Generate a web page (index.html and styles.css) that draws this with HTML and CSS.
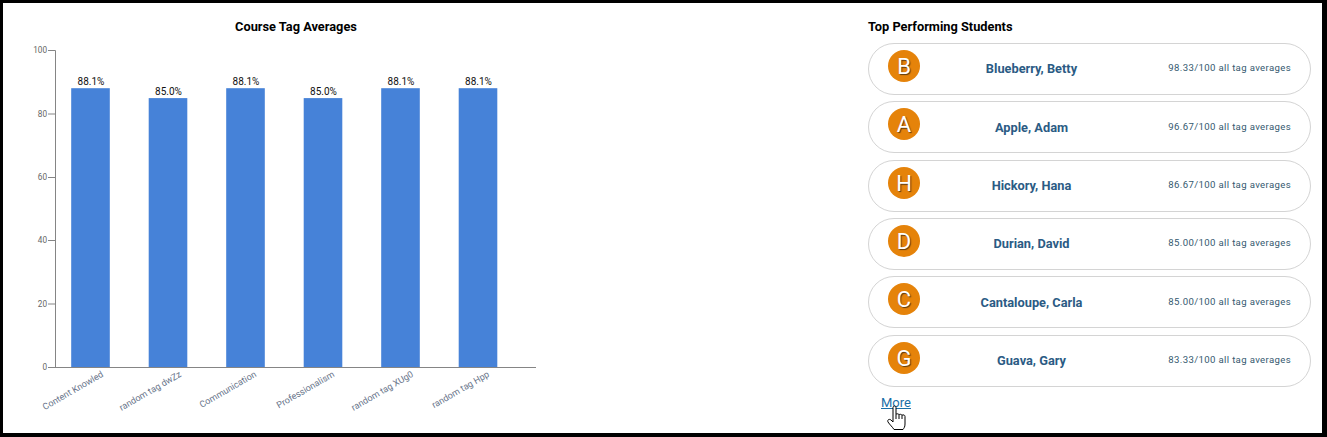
FILE: index.html
```html
<!DOCTYPE html>
<html lang="en">

<head>
  <meta charset="UTF-8">
  <title>Course Overview</title>
  <link rel="stylesheet" href="styles.css">
</head>

<body>
  <div class="app">
    <section class="chart-panel">
      <svg class="chart" width="540" height="427" viewBox="0 0 540 427">
        <text class="chart-title" x="293" y="28">Course Tag Averages</text>

        <g class="bars">
          <rect x="68.2" y="85.2" width="38.6" height="279.3" />
          <rect x="145.7" y="95.1" width="38.6" height="269.4" />
          <rect x="223.2" y="85.2" width="38.6" height="279.3" />
          <rect x="300.7" y="95.1" width="38.6" height="269.4" />
          <rect x="378.2" y="85.2" width="38.6" height="279.3" />
          <rect x="455.7" y="85.2" width="38.6" height="279.3" />
        </g>

        <g class="bar-values">
          <text x="88" y="82">88.1%</text>
          <text x="165.5" y="92">85.0%</text>
          <text x="243" y="82">88.1%</text>
          <text x="320.5" y="92">85.0%</text>
          <text x="398" y="82">88.1%</text>
          <text x="475.5" y="82">88.1%</text>
        </g>

        <g class="axis">
          <path d="M52.5 47.500V364.500H533" />
          <path d="M45 47.500H52.500M45 111H52.500M45 174.500H52.500M45 237.500H52.500M45 301H52.500M45 364.500H54" />
        </g>

        <g class="y-labels">
          <text x="44" y="50">100</text>
          <text x="44" y="114">80</text>
          <text x="44" y="177">60</text>
          <text x="44" y="240">40</text>
          <text x="44" y="304">20</text>
          <text x="44" y="367">0</text>
        </g>

        <g class="x-labels">
          <text transform="translate(101 373) rotate(-30)">Content Knowled</text>
          <text transform="translate(179 373) rotate(-30)">random tag dwZz</text>
          <text transform="translate(254 373) rotate(-30)">Communication</text>
          <text transform="translate(332 373) rotate(-30)">Professionalism</text>
          <text transform="translate(411 373) rotate(-30)">random tag XUg0</text>
          <text transform="translate(487 373) rotate(-30)">random tag Hpp</text>
        </g>
      </svg>
    </section>

    <section class="students">
      <h2 class="students-title">Top Performing Students</h2>
      <div class="student">
        <span class="avatar">B</span>
        <span class="name">Blueberry, Betty</span>
        <span class="score">98.33/100 all tag averages</span>
      </div>
      <div class="student">
        <span class="avatar">A</span>
        <span class="name">Apple, Adam</span>
        <span class="score">96.67/100 all tag averages</span>
      </div>
      <div class="student">
        <span class="avatar">H</span>
        <span class="name">Hickory, Hana</span>
        <span class="score">86.67/100 all tag averages</span>
      </div>
      <div class="student">
        <span class="avatar">D</span>
        <span class="name">Durian, David</span>
        <span class="score">85.00/100 all tag averages</span>
      </div>
      <div class="student">
        <span class="avatar">C</span>
        <span class="name">Cantaloupe, Carla</span>
        <span class="score">85.00/100 all tag averages</span>
      </div>
      <div class="student">
        <span class="avatar">G</span>
        <span class="name">Guava, Gary</span>
        <span class="score">83.33/100 all tag averages</span>
      </div>
      <div class="more-row">
        <a class="more" href="#">More</a>
        <svg class="cursor" width="24" height="26" viewBox="0 0 24 26">
          <path d="M7 14V3.500C7 1.500 10 1.500 10 3.500V10.500C10 9.500 13 9.500 13 11C13 10 16 10 16 11.500C16 10.500 19 10.500 19 12.500V20C19 23 18 24 17 25.500H8C6.500 23 4 21 2 18C1 16 3 14.500 5 16L7 18Z" />
          <path class="cursor-lines" d="M10 10.500V15M13 11V15M16 11.500V15" />
        </svg>
      </div>
    </section>
  </div>
</body>

</html>
```

FILE: styles.css
```css
* {
  padding: 0;
  margin: 0;
  box-sizing: border-box;
}

body {
  background-color: #000;
  font-family: Roboto, "Liberation Sans", sans-serif;
}

.app {
  display: flex;
  justify-content: space-between;
  width: 1325px;
  height: 436px;
  border: 3px solid #000;
  background-color: #fff;
}

.chart-panel {
  width: 540px;
}

.chart {
  display: block;
}

.chart-title {
  font-size: 12.8px;
  font-weight: 700;
  text-anchor: middle;
  fill: #000;
}

.bars rect {
  fill: #4682d8;
}

.bar-values text {
  font-size: 10px;
  text-anchor: middle;
  fill: #111;
}

.axis path {
  fill: none;
  stroke: #858585;
  stroke-width: 1;
}

.y-labels text {
  font-size: 8.2px;
  text-anchor: end;
  fill: #666;
}

.x-labels text {
  font-size: 9px;
  text-anchor: end;
  fill: #68748a;
}

.students {
  width: 443px;
  margin-right: 11px;
  padding-top: 17px;
}

.students-title {
  height: 23px;
  font-size: 12.8px;
  line-height: 14px;
  font-weight: 700;
  color: #000;
}

.student {
  display: grid;
  grid-template-columns: 32px 223px 1fr;
  height: 52px;
  margin-bottom: 6.35px;
  padding: 6px 19px;
  border: 1px solid #d4d4d4;
  border-radius: 26px;
}

.avatar {
  width: 32px;
  height: 32px;
  border-radius: 50%;
  background-color: #e5830a;
  color: #fff;
  font-size: 22px;
  line-height: 33px;
  text-align: center;
  text-shadow: 1px 1px 1px #5c3a10;
}

.name {
  padding-top: 12.2px;
  font-size: 12.8px;
  line-height: 14px;
  font-weight: 700;
  text-align: center;
  color: #2b5b84;
}

.score {
  padding-top: 12.2px;
  font-size: 9.6px;
  line-height: 12px;
  letter-spacing: 0.35px;
  text-align: right;
  white-space: nowrap;
  color: #35596f;
}

.more-row {
  position: relative;
  margin-top: -1px;
  padding-left: 13px;
}

.more {
  font-size: 13px;
  line-height: 15px;
  color: #1a6ea8;
}

.cursor {
  position: absolute;
  left: 18px;
  top: 12px;
}

.cursor path {
  fill: #fff;
  stroke: #000;
  stroke-width: 1;
}

.cursor .cursor-lines {
  fill: none;
  stroke-width: 1;
}
```
